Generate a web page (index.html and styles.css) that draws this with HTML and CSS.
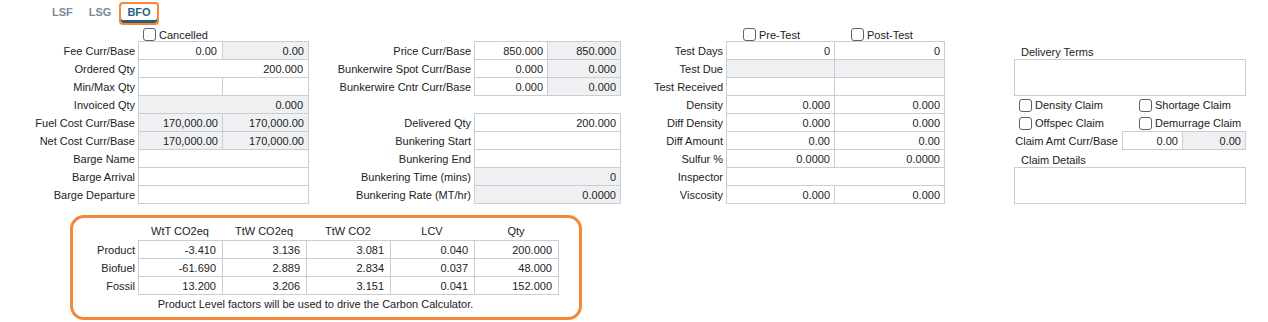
FILE: index.html
```html
<!DOCTYPE html>
<html lang="en">
<head>
    <meta charset="UTF-8">
    <title>BFO Delivery</title>
    <link rel="stylesheet" href="styles.css">
</head>
<body>
    <div class="tabs">
        <span class="tab">LSF</span>
        <span class="tab">LSG</span>
        <span class="tab active">BFO</span>
    </div>

    <div class="form">
        <!-- pricing / quantities -->
        <div class="sect sect-a">
            <span></span>
            <label class="check span2"><span class="box"></span>Cancelled</label>

            <span class="lbl">Fee Curr/Base</span>
            <span class="fld">0.00</span>
            <span class="fld ro">0.00</span>

            <span class="lbl">Ordered Qty</span>
            <span class="fld span2">200.000</span>

            <span class="lbl">Min/Max Qty</span>
            <span class="fld"></span>
            <span class="fld"></span>

            <span class="lbl">Invoiced Qty</span>
            <span class="fld ro span2">0.000</span>

            <span class="lbl">Fuel Cost Curr/Base</span>
            <span class="fld ro">170,000.00</span>
            <span class="fld ro">170,000.00</span>

            <span class="lbl">Net Cost Curr/Base</span>
            <span class="fld ro">170,000.00</span>
            <span class="fld ro">170,000.00</span>

            <span class="lbl">Barge Name</span>
            <span class="fld span2"></span>

            <span class="lbl">Barge Arrival</span>
            <span class="fld span2"></span>

            <span class="lbl">Barge Departure</span>
            <span class="fld span2"></span>
        </div>

        <!-- price / bunkering -->
        <div class="sect sect-b">
            <span class="span3"></span>

            <span class="lbl">Price Curr/Base</span>
            <span class="fld">850.000</span>
            <span class="fld ro">850.000</span>

            <span class="lbl">Bunkerwire Spot Curr/Base</span>
            <span class="fld">0.000</span>
            <span class="fld ro">0.000</span>

            <span class="lbl">Bunkerwire Cntr Curr/Base</span>
            <span class="fld">0.000</span>
            <span class="fld ro">0.000</span>

            <span class="span3"></span>

            <span class="lbl">Delivered Qty</span>
            <span class="fld span2">200.000</span>

            <span class="lbl">Bunkering Start</span>
            <span class="fld span2"></span>

            <span class="lbl">Bunkering End</span>
            <span class="fld span2"></span>

            <span class="lbl">Bunkering Time (mins)</span>
            <span class="fld ro span2">0</span>

            <span class="lbl">Bunkering Rate (MT/hr)</span>
            <span class="fld ro span2">0.0000</span>
        </div>

        <!-- testing -->
        <div class="sect sect-c">
            <span></span>
            <label class="check"><span class="box"></span>Pre-Test</label>
            <label class="check"><span class="box"></span>Post-Test</label>

            <span class="lbl">Test Days</span>
            <span class="fld">0</span>
            <span class="fld">0</span>

            <span class="lbl">Test Due</span>
            <span class="fld ro"></span>
            <span class="fld ro"></span>

            <span class="lbl">Test Received</span>
            <span class="fld"></span>
            <span class="fld"></span>

            <span class="lbl">Density</span>
            <span class="fld">0.000</span>
            <span class="fld">0.000</span>

            <span class="lbl">Diff Density</span>
            <span class="fld">0.000</span>
            <span class="fld">0.000</span>

            <span class="lbl">Diff Amount</span>
            <span class="fld">0.00</span>
            <span class="fld">0.00</span>

            <span class="lbl">Sulfur %</span>
            <span class="fld">0.0000</span>
            <span class="fld">0.0000</span>

            <span class="lbl">Inspector</span>
            <span class="fld span2"></span>

            <span class="lbl">Viscosity</span>
            <span class="fld">0.000</span>
            <span class="fld">0.000</span>
        </div>

        <!-- terms / claims -->
        <div class="sect sect-d">
            <span class="span3"></span>
            <span class="cap span3">Delivery Terms</span>
            <span class="memo span3"></span>

            <div class="claims span3">
                <label class="check"><span class="box"></span>Density Claim</label>
                <label class="check"><span class="box"></span>Shortage Claim</label>
            </div>
            <div class="claims span3">
                <label class="check"><span class="box"></span>Offspec Claim</label>
                <label class="check"><span class="box"></span>Demurrage Claim</label>
            </div>

            <span class="lbl">Claim Amt Curr/Base</span>
            <span class="fld">0.00</span>
            <span class="fld ro">0.00</span>

            <span class="cap span3">Claim Details</span>
            <span class="memo span3"></span>
        </div>
    </div>

    <div class="carbon">
        <div class="carbon-grid">
            <span></span>
            <span class="head">WtT CO2eq</span>
            <span class="head">TtW CO2eq</span>
            <span class="head">TtW CO2</span>
            <span class="head">LCV</span>
            <span class="head">Qty</span>

            <span class="lbl">Product</span>
            <span class="fld">-3.410</span>
            <span class="fld">3.136</span>
            <span class="fld">3.081</span>
            <span class="fld">0.040</span>
            <span class="fld">200.000</span>

            <span class="lbl">Biofuel</span>
            <span class="fld">-61.690</span>
            <span class="fld">2.889</span>
            <span class="fld">2.834</span>
            <span class="fld">0.037</span>
            <span class="fld">48.000</span>

            <span class="lbl">Fossil</span>
            <span class="fld">13.200</span>
            <span class="fld">3.206</span>
            <span class="fld">3.151</span>
            <span class="fld">0.041</span>
            <span class="fld">152.000</span>
        </div>
        <div class="note">Product Level factors will be used to drive the Carbon Calculator.</div>
    </div>
</body>
</html>
```

FILE: styles.css
```css
body {
    margin: 0;
    font-family: "Liberation Sans", Arial, sans-serif;
    font-size: 11px;
    color: #222;
    background: #fff;
}
.tabs {
    display: flex;
    align-items: flex-start;
    height: 23px;
    padding: 2px 0 0 44px;
    box-sizing: border-box;
}
.tab {
    height: 23px;
    box-sizing: border-box;
    border: 2px solid transparent;
    border-radius: 4px;
    padding: 0 6px;
    line-height: 17px;
    font-weight: bold;
    color: #7d8a97;
    flex: none;
}
.tab.active {
    color: #2b5f80;
    border-color: #f5873b; /* highlight */
    box-shadow: inset 0 -3px 0 #2d5f7c;
}
.form {
    display: flex;
}
.sect {
    display: grid;
    grid-template-rows: repeat(10, 18px);
}
.sect-a {
    grid-template-columns: 138px 84px 86px;
}
.sect-b {
    grid-template-columns: 166px 73px 73px;
}
.sect-c {
    grid-template-columns: 106px 108px 110px;
}
.sect-d {
    margin-left: 70px;
    width: 231px;
    grid-template-columns: 108px 60px 63px;
}
.span2 {
    grid-column: span 2;
}
.span3 {
    grid-column: span 3;
}
.lbl {
    text-align: right;
    padding-right: 3px;
    line-height: 18px;
    padding-top: 1px;
    white-space: nowrap;
}
.sect-d .lbl {
    padding-right: 4px;
}
.fld {
    border: 1px solid #c9ced6;
    margin: 0 -1px -1px 0;
    background: #fff;
    text-align: right;
    padding: 1px 4px 0 0;
    line-height: 16px;
    white-space: nowrap;
}
.fld.ro {
    background: #eef0f2;
}
.sect-a .fld:nth-child(3n+1),
.sect-a .fld.span2 {
    padding-right: 5px;
}
.check {
    display: flex;
    align-items: center;
    padding-top: 5px;
    white-space: nowrap;
}
.sect-a .check {
    padding-left: 5px;
}
.sect-c .check {
    padding-left: 17px;
}
.box {
    width: 13px;
    height: 13px;
    box-sizing: border-box;
    border: 1px solid #5f6368;
    border-radius: 3px;
    background: #fff;
    margin-right: 3px;
    flex: none;
}
.cap {
    padding: 2px 0 0 7px;
    line-height: 18px;
}
.memo {
    grid-row: span 2;
    border: 1px solid #c9ced6;
    margin: 0 -1px -1px 0;
}
.claims {
    display: flex;
    padding-left: 5px;
}
.claims .check {
    padding-top: 2px;
}
.claims .check:first-child {
    width: 120px;
    flex: none;
}
.carbon {
    margin: 12px 0 0 70px;
    width: 512px;
    height: 105px;
    box-sizing: border-box;
    border: 3px solid #f5873b;
    border-radius: 14px;
    padding-top: 5px;
}
.carbon-grid {
    display: grid;
    grid-template-columns: 65px repeat(5, 84px);
    grid-template-rows: 17px repeat(3, 18px);
}
.carbon-grid .fld {
    padding-right: 6px;
}
.head {
    text-align: center;
    line-height: 17px;
}
.note {
    width: 485px;
    text-align: center;
    line-height: 18px;
    padding-top: 1px;
}
```
